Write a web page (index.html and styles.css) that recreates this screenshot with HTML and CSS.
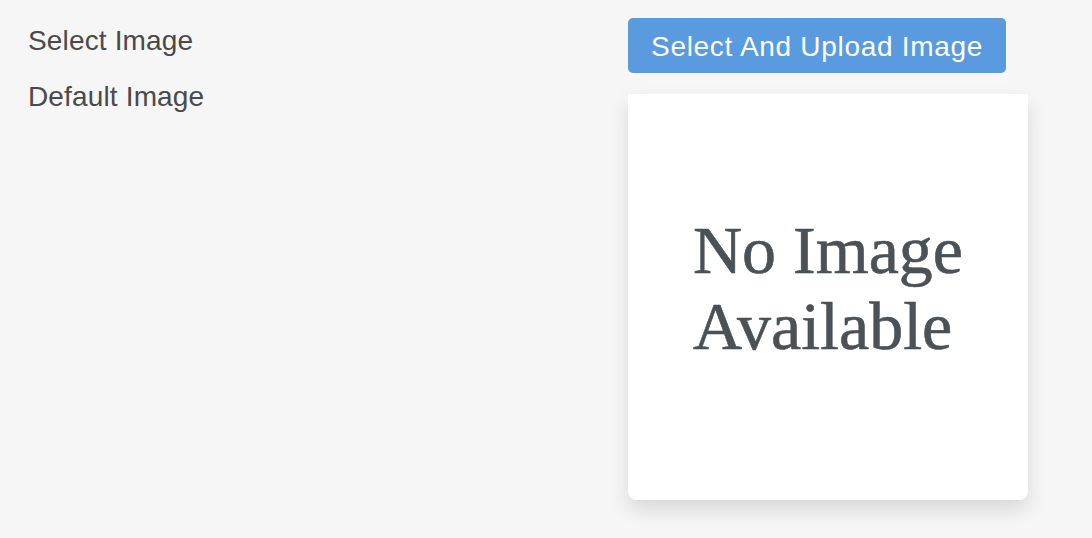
FILE: index.html
```html
<!DOCTYPE html>
<html lang="en">
  <head>
    <meta charset="UTF-8" />
    <meta name="viewport" content="width=device-width, initial-scale=1.0" />
    <title>Select Image</title>
    <link rel="stylesheet" href="styles.css">
  </head>
  <body>
    <div class="page">
      <div class="labels">
        <div class="label">Select Image</div>
        <div class="label">Default Image</div>
      </div>
      <div class="upload">
        <button class="btn" id="uploadBtn">Select And Upload Image</button>
        <div class="preview">
          <div class="no-image">No Image<br />Available</div>
        </div>
      </div>
    </div>
  </body>
</html>
```

FILE: styles.css
```css
* {
  box-sizing: border-box;
  margin: 0;
  padding: 0;
}
body {
  font-family: "Liberation Sans", Arial, sans-serif;
  background: #f6f6f6;
  color: #4a4a4a;
  min-height: 100vh;
}
.page {
  display: grid;
  grid-template-columns: 600px 400px;
  padding: 13px 28px;
}
.label {
  font-size: 28px;
  line-height: 56px;
  color: #4a4a4a;
  letter-spacing: 0.15px;
}
.upload {
  padding-top: 5px;
}
.btn {
  display: block;
  height: 55px;
  padding: 3px 23px 0;
  background: #5a9ade;
  border: none;
  border-radius: 5px;
  color: white;
  font-family: "Liberation Sans", Arial, sans-serif;
  font-size: 28px;
  letter-spacing: 0.7px;
  cursor: pointer;
  margin-bottom: 21px;
}
.preview {
  width: 400px;
  height: 406px;
  background: white;
  border-radius: 0 0 8px 8px;
  box-shadow: 0 10px 20px rgba(0, 0, 0, 0.12);
  display: flex;
  align-items: center;
  justify-content: center;
  padding-bottom: 18px;
}
.no-image {
  font-family: "Liberation Serif", "Times New Roman", serif;
  font-size: 68px;
  line-height: 76px;
  color: #4a5257;
  text-align: left;
  -webkit-text-stroke: 0.6px #4a5257;
}
```
